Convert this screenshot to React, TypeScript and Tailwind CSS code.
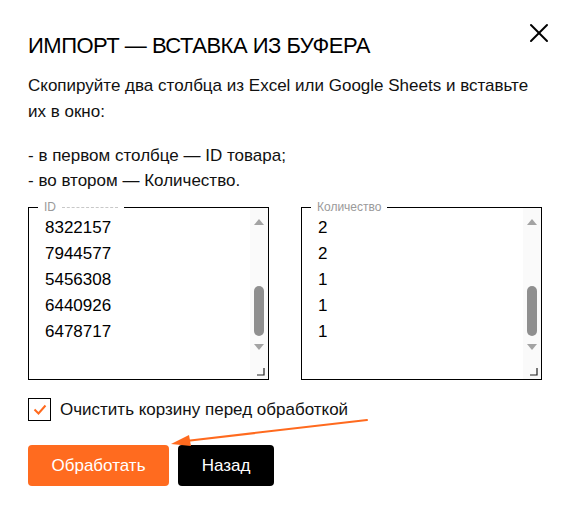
import { X } from 'lucide-react';

const ids = ['8322157', '7944577', '5456308', '6440926', '6478717'];
const qty = ['2', '2', '1', '1', '1'];

// fake textarea scrollbar, drawn
const Scrollbar = () => (
  <div className="absolute right-0 top-0 bottom-0 w-[18px] bg-[#fafafa] flex flex-col items-center">
    <svg width="10" height="6" className="mt-[11px]" viewBox="0 0 10 6">
      <path d="M0 6 L5 0 L10 6 Z" fill="#a3a3a3" />
    </svg>
    <div className="mt-[61px] w-[10px] h-[50px] rounded-full bg-[#8f8f8f]" />
    <svg width="10" height="6" className="mt-[8px]" viewBox="0 0 10 6">
      <path d="M0 0 L5 6 L10 0 Z" fill="#a3a3a3" />
    </svg>
    <svg width="8" height="8" className="absolute bottom-[3px] right-[3px]" viewBox="0 0 8 8">
      <path d="M7 0 V7 H0" stroke="#222" strokeWidth="1.2" fill="none" />
    </svg>
  </div>
);

const Field = ({ legend, rows, ghost }: { legend: string; rows: string[]; ghost?: boolean }) => (
  <div className="relative w-[242px] h-[173px] border border-black">
    <div className="absolute -top-[9px] left-[9px] px-[6px] bg-white flex items-center text-[12px] leading-[16px] text-[#9a9a9a]">
      <span>{legend}</span>
      {ghost && <span className="ml-[6px] w-[56px] border-t border-dashed border-[#c8c8c8]" />}
    </div>
    <div className="pt-[7px] pl-4 text-[17px] leading-[26px] text-black">
      {rows.map((r, i) => (
        <div key={i}>{r}</div>
      ))}
    </div>
    <Scrollbar />
  </div>
);

export default function App() {
  return (
    <div className="relative w-[570px] h-[515px] bg-white overflow-hidden font-['Liberation_Sans',Arial,sans-serif] text-[#111]">
      <button className="absolute top-[17px] right-[15px] text-black">
        <X size={32} strokeWidth={1.5} />
      </button>

      <div className="pl-[28px] pr-[28px] pt-[30px]">
        <h1 className="text-[22px] leading-[32px] tracking-[-0.5px] text-black">ИМПОРТ — ВСТАВКА ИЗ БУФЕРА</h1>

        <p className="mt-[11px] text-[17px] leading-[26px]">
          Скопируйте два столбца из Excel или Google Sheets и вставьте их в окно:
        </p>

        <div className="mt-[18px] text-[17px] leading-[25px]">
          <div>- в первом столбце — ID товара;</div>
          <div>- во втором — Количество.</div>
        </div>

        <div className="mt-[14px] flex gap-[32px]">
          <Field legend="ID" rows={ids} ghost />
          <Field legend="Количество" rows={qty} />
        </div>

        <label className="mt-[18px] flex items-center gap-[9px]">
          <span className="w-[23px] h-[23px] border border-black flex items-center justify-center">
            <svg width="14" height="11" viewBox="0 0 14 11">
              <path d="M1.5 5.5 L5.5 9.5 L12.5 1.5" stroke="#ff6a1e" strokeWidth="2" fill="none" />
            </svg>
          </span>
          <span className="text-[17px] leading-[22px]">Очистить корзину перед обработкой</span>
        </label>

        <div className="mt-[24px] flex gap-[9px]">
          <button className="w-[141px] h-[41px] rounded-[4px] bg-[#ff6b1f] text-white text-[17px]">
            Обработать
          </button>
          <button className="w-[96px] h-[41px] rounded-[4px] bg-black text-white text-[17px]">
            Назад
          </button>
        </div>
      </div>

      {/* annotation arrow */}
      <svg className="absolute inset-0 pointer-events-none" width="570" height="515">
        <line x1="367" y1="420" x2="186" y2="441" stroke="#ff6a1e" strokeWidth="2" strokeLinecap="round" />
        <path d="M171 444 L189 435 L191 446 Z" fill="#ff6a1e" />
      </svg>
    </div>
  );
}
